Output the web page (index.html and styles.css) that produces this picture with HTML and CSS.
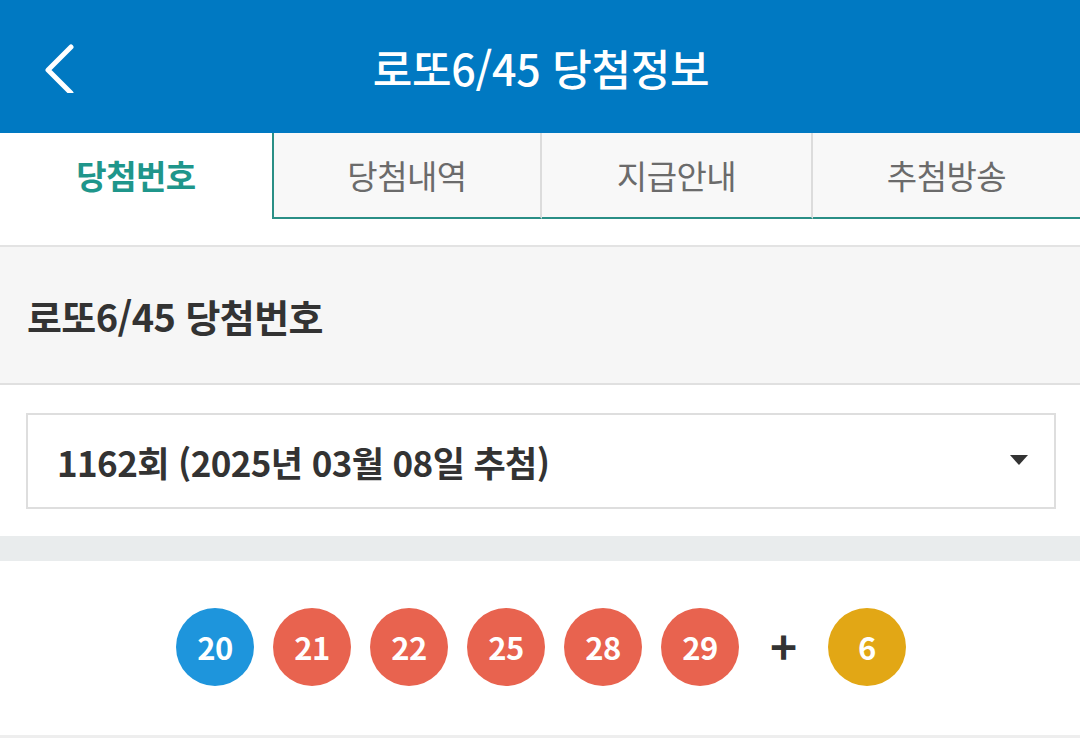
FILE: index.html
```html
<!DOCTYPE html>
<html lang="ko">
<head>
<meta charset="utf-8">
<title>로또6/45 당첨정보</title>
<link rel="stylesheet" href="styles.css">
</head>
<body>
<header class="topbar">
  <div class="back">
    <svg width="40" height="60" viewBox="0 0 40 60"><polyline points="27,14 4,37 27,60" fill="none" stroke="#fff" stroke-width="5" stroke-linecap="round" stroke-linejoin="round"/></svg>
  </div>
  <h1 class="title">로또6/45 당첨정보</h1>
  <div></div>
</header>
<nav class="tabs">
  <div class="tab active">당첨번호</div>
  <div class="tab first">당첨내역</div>
  <div class="tab">지급안내</div>
  <div class="tab last">추첨방송</div>
</nav>
<div class="spacer"></div>
<section class="sechead"><h2>로또6/45 당첨번호</h2></section>
<div class="selwrap">
  <div class="select">
    <span>1162회 (2025년 03월 08일 추첨)</span>
    <span class="caret"></span>
  </div>
</div>
<div class="band"></div>
<div class="balls">
  <span class="ball blue">20</span>
  <span class="ball red">21</span>
  <span class="ball red">22</span>
  <span class="ball red">25</span>
  <span class="ball red">28</span>
  <span class="ball red">29</span>
  <span class="plus">+</span>
  <span class="ball gold">6</span>
</div>
</body>
</html>
```
FILE: styles.css
```css
* { box-sizing: border-box; }
html, body { margin: 0; padding: 0; }
body {
  width: 1080px;
  height: 738px;
  overflow: hidden;
  background: #fff;
  font-family: "Noto Sans CJK KR", "Noto Sans", sans-serif;
  color: #333;
}
.topbar {
  height: 133px;
  background: #0079c2;
  display: grid;
  grid-template-columns: 1fr auto 1fr;
  align-items: center;
}
.back { padding-left: 44px; display: flex; align-items: center; padding-top: 2px; }
.back svg { display: block; margin-top: -10px; }
.title {
  margin: 0;
  color: #fff;
  font-size: 43px;
  font-weight: 500;
  letter-spacing: -0.3px;
  padding-left: 2px;
}
.tabs {
  display: grid;
  grid-template-columns: 272px 270px 271px 1fr;
  height: 86px;
}
.tab {
  display: flex;
  align-items: center;
  justify-content: center;
  font-size: 33px;
  color: #6b6b6b;
  background: #f8f8f8;
  border-bottom: 2px solid #2a8f86;
  border-right: 2px solid #dcdcdc;
  letter-spacing: -0.5px;
}
.tab.active {
  background: #fff;
  color: #1f968b;
  font-weight: 700;
  border-bottom: none;
  border-right: none;
  padding-bottom: 2px;
}
.tab.first { border-left: 2px solid #2a8f86; }
.tab.last { border-right: none; }
.spacer { height: 28px; border-bottom: 2px solid #e3e3e3; }
.sechead {
  height: 138px;
  background: #f6f6f6;
  border-bottom: 2px solid #e0e0e0;
  display: flex;
  align-items: center;
  padding-left: 27px;
}
.sechead h2 {
  margin: 0;
  font-size: 38px;
  font-weight: 700;
  color: #333;
  letter-spacing: -0.6px;
}
.selwrap { padding: 28px 24px 27px 26px; }
.select {
  height: 96px;
  border: 2px solid #dedede;
  display: flex;
  align-items: center;
  justify-content: space-between;
  padding: 0 26px 0 29px;
  font-size: 35px;
  font-weight: 700;
  color: #333;
  letter-spacing: -0.6px;
}
.caret {
  width: 0; height: 0;
  border-left: 9px solid transparent;
  border-right: 9px solid transparent;
  border-top: 10px solid #333;
  margin-top: -2px;
}
.band { height: 25px; background: #e9eced; }
.balls {
  height: 177px;
  border-bottom: 3px solid #eeeeee;
  display: flex;
  align-items: center;
  justify-content: center;
  gap: 19px;
  padding-left: 2px;
  padding-bottom: 3px;
}
.ball {
  width: 78px;
  height: 78px;
  border-radius: 50%;
  display: flex;
  align-items: center;
  justify-content: center;
  color: #fff;
  font-size: 31px;
  font-weight: 700;
  letter-spacing: -0.5px;
}
.blue { background: #1e95dc; }
.red { background: #e8634f; }
.gold { background: #e2a715; }
.plus {
  width: 51px;
  text-align: center;
  font-size: 46px;
  font-weight: 700;
  color: #333;
  line-height: 1;
  margin-top: -4px;
}
```
